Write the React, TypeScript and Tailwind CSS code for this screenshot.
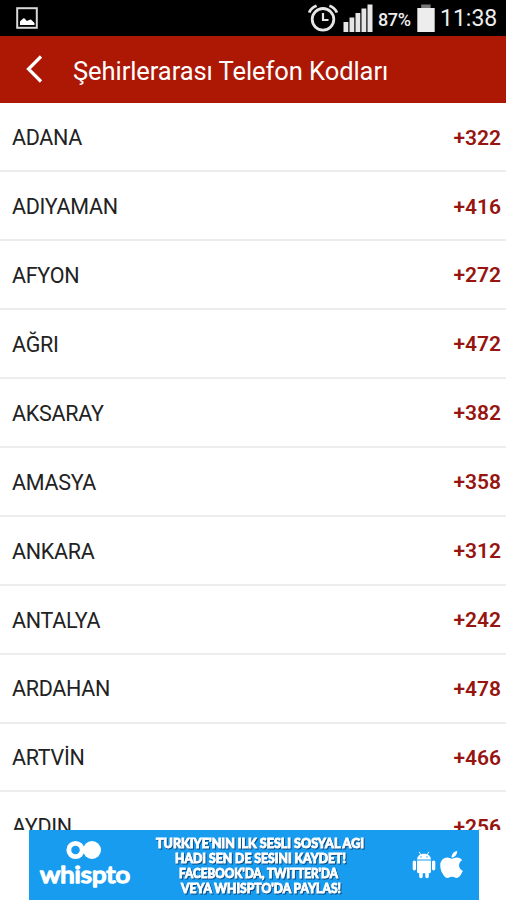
import { FaApple } from "react-icons/fa";

interface AreaCode {
  city: string;
  code: string;
}

const AREA_CODES: AreaCode[] = [
  { city: "ADANA", code: "+322" },
  { city: "ADIYAMAN", code: "+416" },
  { city: "AFYON", code: "+272" },
  { city: "AĞRI", code: "+472" },
  { city: "AKSARAY", code: "+382" },
  { city: "AMASYA", code: "+358" },
  { city: "ANKARA", code: "+312" },
  { city: "ANTALYA", code: "+242" },
  { city: "ARDAHAN", code: "+478" },
  { city: "ARTVİN", code: "+466" },
  { city: "AYDIN", code: "+256" }
];

const PictureIcon = () => (
  <svg viewBox="0 0 22 22" className="size-[22px]" fill="none">
    <rect x="1.2" y="1.2" width="19.6" height="19.6" stroke="#d8d8d8" strokeWidth="2" />
    <path d="M4 18v-3.500l2-2 2-1.500 3 3 2-1 2-.5 3.500 3.500v2z" fill="#fff" />
  </svg>
);

const AlarmIcon = () => (
  <svg viewBox="0 0 30 28" className="h-7 w-[30px]" fill="none" stroke="#e6e6e6">
    <circle cx="15" cy="15.3" r="10.8" strokeWidth="2.8" />
    <path d="M15 9v7h5.5" strokeWidth="2.2" />
    <path d="M1.2 8.6Q3 4 8.6 1.8M28.8 8.6Q27 4 21.4 1.8" strokeWidth="2.8" />
  </svg>
);

const SignalIcon = () => (
  <svg viewBox="0 0 30 28" className="h-7 w-[30px]" fill="#e6e6e6">
    <rect x="0.5" y="18" width="4.8" height="10" />
    <rect x="6.5" y="13.5" width="4.8" height="14.5" />
    <rect x="12.5" y="9" width="4.8" height="19" />
    <rect x="18.5" y="4.5" width="4.8" height="23.5" />
    <rect x="24.5" y="0.5" width="5" height="27.5" />
  </svg>
);

const BatteryIcon = () => (
  <svg viewBox="0 0 18 28" className="h-7 w-[18px]">
    <rect x="4.2" y="0.5" width="9.4" height="4" fill="#777" />
    <rect x="0.3" y="4" width="17.4" height="24" fill="#ededed" />
  </svg>
);

const AndroidIcon = () => (
  <svg viewBox="0 0 24 28" className="h-7 w-6" fill="#fff">
    <path d="M5 8.5C5.2 5.2 8 2.8 12 2.8s6.8 2.4 7 5.7z" />
    <path d="M7.2.8 9 4M16.8.8 15 4" stroke="#fff" strokeWidth="0.9" />
    <circle cx="9" cy="5.9" r="0.7" fill="#179cef" />
    <circle cx="15" cy="5.9" r="0.7" fill="#179cef" />
    <rect x="0.7" y="9.4" width="3.3" height="10" rx="1.6" />
    <rect x="20" y="9.4" width="3.3" height="10" rx="1.6" />
    <path d="M5 9.4h14v11.2a1.6 1.6 0 0 1-1.6 1.6H6.6A1.6 1.6 0 0 1 5 20.600z" />
    <rect x="7.2" y="18" width="3.5" height="9.2" rx="1.7" />
    <rect x="13.3" y="18" width="3.5" height="9.2" rx="1.7" />
  </svg>
);

const StatusBar = () => (
  <div className="flex h-9 items-center bg-black pl-4 text-[#ededed]">
    <PictureIcon />
    <div className="ml-[270px] flex items-center">
      <AlarmIcon />
      <div className="ml-[5px]">
        <SignalIcon />
      </div>
      <span className="ml-[5px] w-[39px] pt-0.5 text-[18px] font-medium tracking-[-0.4px]">87%</span>
      <BatteryIcon />
      <span className="ml-[5px] pt-0.5 text-[23px]">11:38</span>
    </div>
  </div>
);

const Header = () => (
  <header className="flex h-[66.500px] items-center bg-[#ad1805] pl-[25px] text-white">
    <svg viewBox="0 0 18 28" className="h-7 w-[18px]" fill="none">
      <path d="M16 1.500 3.500 14 16 26.500" stroke="#fff" strokeWidth="3.2" />
    </svg>
    <h1 className="ml-[30px] pt-[3px] text-[25.500px] leading-8 tracking-[-0.07px] whitespace-nowrap">
      Şehirlerarası Telefon Kodları
    </h1>
  </header>
);

const CodeRow = ({ city, code }: AreaCode) => (
  <li className="flex h-[68.900px] shrink-0 items-center justify-between border-b-2 border-[#ededed] pt-[3px] pr-[5px] pl-3">
    <span className="text-[21.500px] tracking-[-0.28px] text-[#222]">{city}</span>
    <span className="text-[21px] font-semibold text-[#971510]">{code}</span>
  </li>
);

const WhisptoLogo = () => (
  <svg viewBox="0 0 96 60" className="h-[60px] w-24" fill="#fff">
    <circle cx="37.500" cy="11" r="6.700" fill="none" stroke="#fff" strokeWidth="4.800" />
    <circle cx="54" cy="11" r="9" />
    <text
      x="2"
      y="43.500"
      textLength="90"
      lengthAdjust="spacingAndGlyphs"
      stroke="#fff"
      strokeWidth="1.600"
      strokeLinejoin="round"
      className="font-['Lato'] text-[23px]"
    >
      whispto
    </text>
  </svg>
);

const BANNER_LINES = [
  { text: "TURKIYE'NIN ILK SESLI SOSYAL AGI", x: 16, y: 17.5, width: 208 },
  { text: "HADI SEN DE SESINI KAYDET!", x: 35, y: 32.5, width: 171 },
  { text: "FACEBOOK'DA, TWITTER'DA", x: 39, y: 47.5, width: 159 },
  { text: "VEYA WHISPTO'DA PAYLAS!", x: 41, y: 62.5, width: 160 }
];

const BannerText = () => (
  <svg viewBox="0 0 240 70" className="h-[70px] w-60 drop-shadow-[1px_1px_0_#0b4d86]">
    {BANNER_LINES.map((line) => (
      <text
        key={line.text}
        x={line.x}
        y={line.y}
        textLength={line.width}
        lengthAdjust="spacingAndGlyphs"
        fill="#fff"
        stroke="#fff"
        strokeWidth="0.9"
        className="font-['Lato'] text-[13.500px] font-black"
      >
        {line.text}
      </text>
    ))}
  </svg>
);

const AdBanner = () => (
  <div className="flex h-[70px] bg-white pr-[27.500px] pl-[28.500px]">
    <div className="flex flex-1 bg-[#179cef]">
      <div className="ml-[9.500px] pt-[9px]">
        <WhisptoLogo />
      </div>
      <div className="ml-[6px]">
        <BannerText />
      </div>
      <div className="ml-[32px] flex items-start gap-1 pt-[21px] text-white">
        <AndroidIcon />
        <FaApple className="-mt-0.5 h-[31px] w-[23px]" />
      </div>
    </div>
  </div>
);

export default function App() {
  return (
    <main className="flex h-[900px] w-[506px] flex-col overflow-hidden bg-white font-['Roboto',sans-serif]">
      <StatusBar />
      <Header />
      <ul className="flex min-h-0 flex-1 flex-col overflow-hidden pt-px">
        {AREA_CODES.map((item) => (
          <CodeRow key={item.city} {...item} />
        ))}
      </ul>
      <AdBanner />
    </main>
  );
}
